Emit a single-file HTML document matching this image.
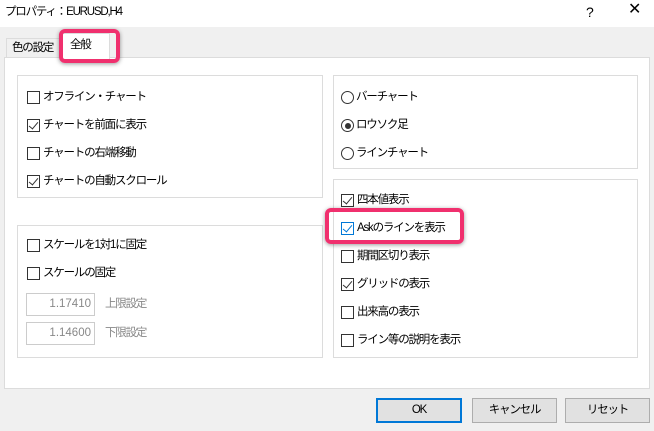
<!DOCTYPE html>
<html><head><meta charset="utf-8"><style>
*{margin:0;padding:0;box-sizing:border-box}
body{width:654px;height:431px;background:#f0f0f0;position:relative;overflow:hidden;font-family:"Liberation Sans","Noto Sans CJK JP",sans-serif;font-size:11.5px;letter-spacing:-1.2px;color:#000}
.a{position:absolute}
.title{left:0;top:0;width:654px;height:27px;background:#fff}
.box{position:absolute;border:1px solid #dcdcdc;background:#fff}
.cb{position:absolute;width:13px;height:13px;border:1px solid #333;background:#fff}
.cb.c::after{content:"";position:absolute;left:3px;top:0px;width:4px;height:8px;border-right:1.3px solid #333;border-bottom:1.3px solid #333;transform:rotate(40deg)}
.cb.blue{border-color:#0078d7}
.cb.blue::after{border-color:#0078d7}
.lbl{position:absolute;white-space:nowrap;line-height:14px}
.rd{position:absolute;width:13px;height:13px;border:1px solid #333;border-radius:50%;background:#fff}
.rd.on::after{content:"";position:absolute;left:2.5px;top:2.5px;width:6px;height:6px;border-radius:50%;background:#333}
.inp{position:absolute;border:1px solid #ccc;background:#fff;color:#888;text-align:right;padding-right:3px;line-height:20px;width:69px;height:23px;letter-spacing:0}
.btn{position:absolute;height:25px;border:1px solid #adadad;background:#e1e1e1;text-align:center;line-height:23px}
.hl{position:absolute;border:4px solid #f0306e;border-radius:6px;box-shadow:0 1px 4px rgba(0,0,0,.4)}
</style></head><body>
<div class="a title"></div>
<div class="lbl" style="left:5px;top:5px">プロパティ：EURUSD,H4</div>
<div class="lbl" style="left:586px;top:5px;font-size:14px">?</div>
<div class="lbl" style="left:628px;top:3px;font-size:16px">✕</div>

<div class="a" style="left:6px;top:38px;width:54px;height:20px;border:1px solid #dcdcdc;border-bottom:none;background:#f0f0f0"></div>
<div class="lbl" style="left:12px;top:41px">色の設定</div>
<div class="box" style="left:4px;top:57px;width:646px;height:332px"></div>
<div class="a" style="left:60px;top:33px;width:50px;height:26px;background:#fff;border:1px solid #dcdcdc;border-bottom:none"></div>
<div class="lbl" style="left:70px;top:38px">全般</div>
<div class="hl" style="left:59px;top:29px;width:61px;height:34px"></div>

<div class="box" style="left:17px;top:75px;width:306px;height:123px"></div>
<div class="cb" style="left:27px;top:91px"></div><div class="lbl" style="left:43px;top:90px">オフライン・チャート</div>
<div class="cb c" style="left:27px;top:119px"></div><div class="lbl" style="left:43px;top:118px">チャートを前面に表示</div>
<div class="cb" style="left:27px;top:147px"></div><div class="lbl" style="left:43px;top:146px">チャートの右端移動</div>
<div class="cb c" style="left:27px;top:175px"></div><div class="lbl" style="left:43px;top:174px">チャートの自動スクロール</div>

<div class="box" style="left:17px;top:225px;width:306px;height:133px"></div>
<div class="cb" style="left:27px;top:239px"></div><div class="lbl" style="left:43px;top:238px">スケールを1対1に固定</div>
<div class="cb" style="left:27px;top:267px"></div><div class="lbl" style="left:43px;top:266px">スケールの固定</div>
<div class="inp" style="left:26px;top:293px">1.17410</div><div class="lbl" style="left:105px;top:297px;color:#888">上限設定</div>
<div class="inp" style="left:26px;top:322px">1.14600</div><div class="lbl" style="left:105px;top:326px;color:#888">下限設定</div>

<div class="box" style="left:333px;top:75px;width:305px;height:94px"></div>
<div class="rd" style="left:341px;top:91px"></div><div class="lbl" style="left:356px;top:90px">バーチャート</div>
<div class="rd on" style="left:341px;top:119px"></div><div class="lbl" style="left:356px;top:118px">ロウソク足</div>
<div class="rd" style="left:341px;top:147px"></div><div class="lbl" style="left:356px;top:146px">ラインチャート</div>

<div class="box" style="left:333px;top:179px;width:305px;height:179px"></div>
<div class="cb c" style="left:341px;top:194px"></div><div class="lbl" style="left:357px;top:193px">四本値表示</div>
<div class="cb c blue" style="left:341px;top:222px"></div><div class="lbl" style="left:357px;top:221px">Askのラインを表示</div>
<div class="cb" style="left:341px;top:250px"></div><div class="lbl" style="left:357px;top:249px">期間区切り表示</div>
<div class="cb c" style="left:341px;top:278px"></div><div class="lbl" style="left:357px;top:277px">グリッドの表示</div>
<div class="cb" style="left:341px;top:306px"></div><div class="lbl" style="left:357px;top:305px">出来高の表示</div>
<div class="cb" style="left:341px;top:334px"></div><div class="lbl" style="left:357px;top:333px">ライン等の説明を表示</div>
<div class="hl" style="left:325px;top:208px;width:139px;height:36px"></div>

<div class="btn" style="left:376px;top:398px;width:86px;border:2px solid #0078d7;line-height:21px">OK</div>
<div class="btn" style="left:472px;top:398px;width:85px">キャンセル</div>
<div class="btn" style="left:565px;top:398px;width:85px">リセット</div>
</body></html>
